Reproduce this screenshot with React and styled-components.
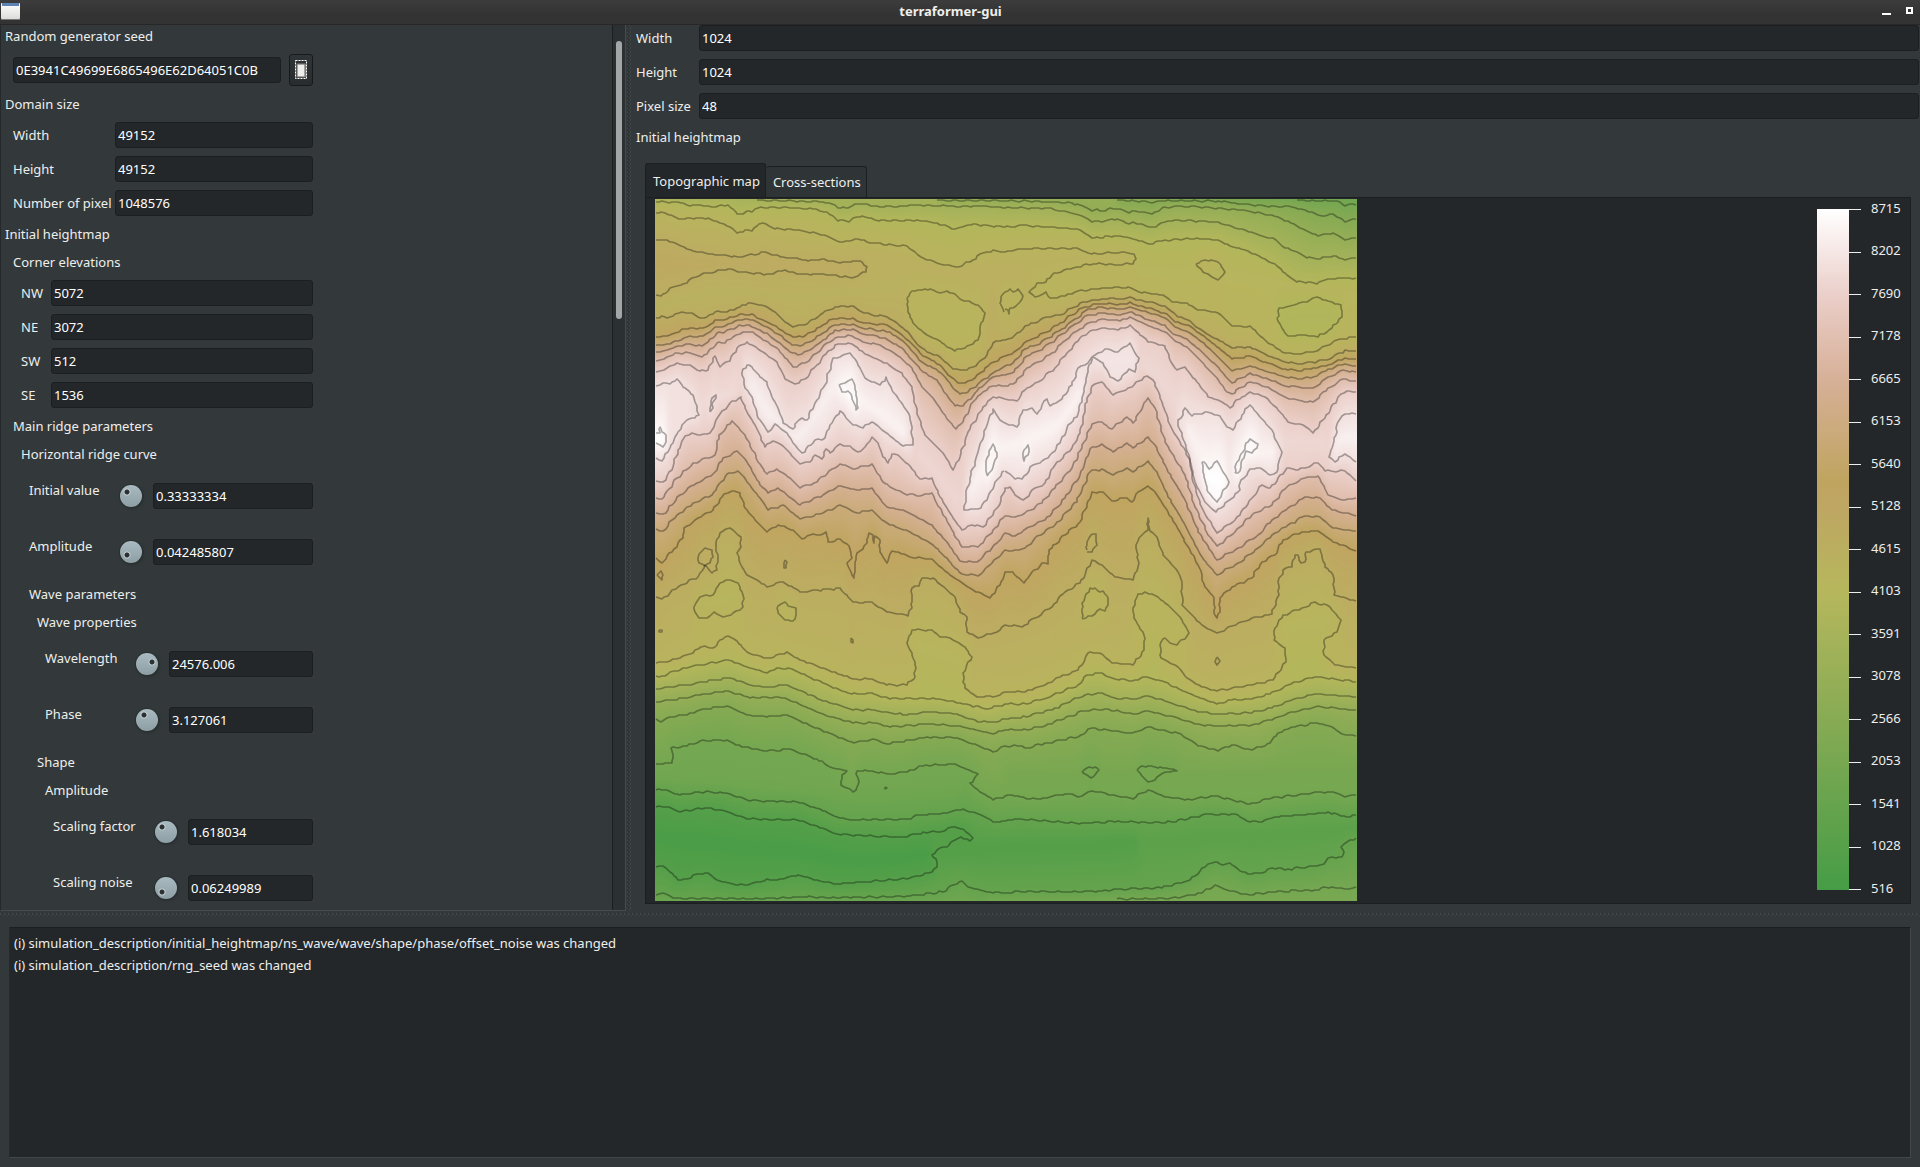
import React, { useId, useState } from "react";
import styled, { createGlobalStyle } from "styled-components";

const GlobalStyle = createGlobalStyle`
  * { box-sizing: border-box; }
  html, body { margin: 0; padding: 0; background: #33393b; }
  body, input, button {
    font-family: "Noto Sans", "Open Sans", sans-serif;
    font-size: 13px;
    line-height: 20px;
    color: #eeeeec;
  }
`;

const Shell = styled.div`
  display: flex;
  flex-direction: column;
  height: 100vh;
  overflow: hidden;
`;

/* ---------- title bar ---------- */

const TitleBar = styled.header`
  flex: none;
  display: flex;
  align-items: center;
  height: 25px;
  padding: 0 7px 2px 1px;
  background: linear-gradient(#3c3c3c, #333333 60%);
  border-bottom: 1px solid #272727;
`;

const AppIcon = styled.svg`
  width: 19px;
  height: 17px;
`;

const Title = styled.h1`
  flex: 1;
  margin: 0;
  font-size: 13px;
  line-height: 20px;
  font-weight: 700;
  text-align: center;
`;

const WindowButton = styled.button`
  display: flex;
  padding: 0;
  border: 0;
  background: none;
  & + & { margin-left: 14px; }
`;

/* ---------- panes ---------- */

const Workspace = styled.div`
  flex: 1;
  min-height: 0;
  display: flex;
`;

const Sidebar = styled.aside`
  flex: none;
  width: 33%;
  max-width: 626px;
  display: flex;
  border: 1px solid #454c4e;
  border-top: 0;
  border-left-color: #25292b;
`;

const ParameterList = styled.div`
  flex: 1;
  min-width: 0;
  padding: 1px 0 0 4px;
  overflow: hidden;
`;

const Scrollbar = styled.div`
  flex: none;
  width: 13px;
  padding: 16px 3px 0;
  border-left: 1px solid #1c1f20;
  background: #2b3032;
`;

const ScrollThumb = styled.div`
  width: 6px;
  height: 32%;
  border-radius: 3px;
  background: #a3a6a6;
`;

const Splitter = styled.div`
  flex: none;
  width: ${(p) => (p.$horizontal ? "auto" : "7px")};
  height: ${(p) => (p.$horizontal ? "7px" : "auto")};
  padding: ${(p) => (p.$horizontal ? "1px 0 2px" : "0 2px 0 1px")};
  background-color: #33393b;
  background-image:
    linear-gradient(45deg, #41484a 25%, transparent 25%, transparent 75%, #41484a 75%),
    linear-gradient(45deg, #2e3335 25%, transparent 25%, transparent 75%, #2e3335 75%);
  background-size: 4px 4px;
  background-position: 0 0, 2px 0;
  background-clip: content-box;
`;

const Preview = styled.main`
  flex: 1;
  min-width: 0;
  display: flex;
  flex-direction: column;
  padding: 0 1px 7px 3px;
`;

/* ---------- form parts ---------- */

const Group = styled.section`
  display: flex;
  flex-direction: column;
  gap: 8px;
  width: ${(p) => (p.$root ? "308px" : "auto")};
  padding-left: ${(p) => (p.$root ? "0" : "8px")};
`;

const Heading = styled.h2`
  margin: 0;
  font-size: 13px;
  line-height: 20px;
  font-weight: 400;
`;

const Row = styled.div`
  display: flex;
  align-items: center;
  min-height: ${(p) => (p.$tall ? "48px" : "26px")};
`;

const Label = styled.label`
  flex: none;
  width: ${(p) => p.$width}px;
  padding-bottom: ${(p) => (p.$raised ? "12px" : "0")};
  white-space: nowrap;
`;

const TextField = styled.input`
  flex: 1;
  min-width: 0;
  height: 26px;
  padding: 0 2px;
  border: 1px solid #1c1f20;
  border-radius: 3px;
  background: #232729;
  color: #ffffff;
  outline: none;
`;

const Knob = styled.input`
  flex: none;
  appearance: none;
  width: 22px;
  height: 22px;
  margin: 0 11px 0 0;
  border-radius: 50%;
  box-shadow: 0 0 0 1px #2b3032, 1px 1px 2px 1px #2b3032;
  background:
    radial-gradient(circle at ${(p) => p.$x}px ${(p) => p.$y}px, #2b3032 2px, #c4cfd2 3px, transparent 4px),
    linear-gradient(#a9bbc0, #8d9fa4);
  &::-webkit-slider-thumb { appearance: none; width: 1px; height: 1px; }
`;

const SeedRow = styled.div`
  display: flex;
  align-items: center;
  gap: 8px;
  height: 32px;
`;

const SeedButton = styled.button`
  flex: none;
  display: flex;
  align-items: center;
  justify-content: center;
  width: 24px;
  height: 32px;
  padding: 0;
  border: 1px solid #17191a;
  border-radius: 3px;
  background: linear-gradient(#2f3537, #272c2e);
`;

/* ---------- right pane ---------- */

const SizeForm = styled.form`
  display: flex;
  flex-direction: column;
  gap: 8px;
`;

const PreviewBody = styled.section`
  flex: 1;
  min-height: 0;
  display: flex;
  flex-direction: column;
  padding: 0 8px 0 9px;
`;

const PreviewHeading = styled(Heading)`
  padding: 8px 0 16px;
`;

const TabList = styled.div`
  display: flex;
  align-items: flex-end;
`;

const Tab = styled.button`
  height: ${(p) => (p.$active ? "34px" : "31px")};
  padding: 0 5px 0 7px;
  border: 1px solid #1c1f20;
  border-bottom: 0;
  border-left-width: ${(p) => (p.$active ? "1px" : "0")};
  border-radius: 3px 3px 0 0;
  background: ${(p) => (p.$active ? "#232729" : "#2f3537")};
`;

const TabPage = styled.div`
  flex: 1;
  min-height: 0;
  display: flex;
  justify-content: space-between;
  padding: 1px 9px 2px;
  border: 1px solid #1c1f20;
  background: #232729;
`;

const MapSvg = styled.svg`
  display: block;
  height: 100%;
  aspect-ratio: 1;
  overflow: hidden;
`;

const Legend = styled.div`
  display: flex;
  padding: 10px 0 11px;
`;

const LegendBar = styled.div`
  width: 32px;
  background: linear-gradient(#ffffff, #ebcfca 12.5%, #d7b098 25%, #bfa45f 40%, #bea663 43.75%, #b6b75c 56.25%, #77a751 81.25%, #469c46);
`;

const LegendScale = styled.ol`
  display: flex;
  flex-direction: column;
  justify-content: space-between;
  margin: 0;
  padding: 0;
  list-style: none;
`;

const LegendTick = styled.li`
  display: flex;
  align-items: center;
  gap: 10px;
  height: 1px;
  &::before {
    content: "";
    width: 12px;
    height: 1px;
    background: #eeeeec;
  }
`;

const TickLabel = styled.span`
  width: 30px;
  padding-bottom: 4px;
`;

/* ---------- log ---------- */

const LogPane = styled.footer`
  flex: none;
  display: flex;
  height: 249px;
  padding: 9px;
`;

const LogBox = styled.ul`
  flex: 1;
  margin: 0;
  padding: 4px;
  list-style: none;
  line-height: 22px;
  border: 1px solid #414849;
  border-top-color: #1c1f20;
  border-left-color: #25292b;
  background: #232729;
`;

/* ---------- topographic map ---------- */

// Map units: x 15..2121, y 12..2118. The second list of a line is shifted east.
const EAST = 1065;
const line = (level, west, east = []) => {
  const pairs = (a, dx) => {
    const out = [];
    for (let i = 0; i < a.length; i += 2) out.push([a[i] + dx, a[i + 1]]);
    return out;
  };
  return { level, pts: [...pairs(west, 0), ...pairs(east, EAST)] };
};

const contours = [
  line(2000, [], [875,16,980,18,1005,22,1020,34,1035,27,1053,29]),
  line(2500, [], [335,15,410,19,440,23,470,17,640,18,700,26,780,33,860,36,920,51,950,62,985,58,1020,80,1035,74,1053,72]),
  line(3000, [860,16,1060,18], [0,17,130,20,200,25,235,34,262,48,275,43,290,49,315,39,345,41,372,54,380,47,440,56,470,40,520,33,600,37,710,45,800,61,850,79,885,98,940,122,985,115,1020,134,1053,128]),
  line(3500, [320,16,520,20,555,30,565,38,580,36,595,39,615,26,650,28,680,34,750,33,800,30,900,34,1000,34,1060,38], [0,38,130,40,190,52,230,62,260,80,290,81,320,73,355,77,372,88,385,82,440,97,490,77,520,75,640,82,710,102,770,123,805,130,840,158,875,170,905,188,945,191,985,183,1020,194,1053,188]),
  line(4000, [18,20,85,22,110,30,150,31,185,35,235,31,250,42,262,56,280,56,290,48,305,50,325,38,400,37,490,41,530,51,550,64,565,79,580,76,597,80,620,66,645,66,675,75,750,78,800,76,860,85,885,90,905,101,925,98,945,93,970,87,1000,91,1060,96], [0,96,55,91,130,96,215,103,235,112,260,128,285,130,310,124,345,123,385,131,432,147,480,136,575,130,640,136,675,153,720,165,770,188,810,208,840,235,875,260,910,261,935,267,960,254,1000,250,1053,249]),
  line(4500, [18,53,45,53,75,66,95,72,120,69,175,70,210,83,240,95,262,115,285,104,305,108,320,93,340,85,375,101,440,104,530,122,570,142,600,139,625,132,660,143,770,154,820,190,870,207,925,216,960,200,1000,174,1030,165,1060,172], [0,171,50,162,130,160,215,160,260,177,350,172,388,178,393,192,385,206,340,209,265,206,205,218,140,240,122,260,95,265,72,290,90,305,122,292,135,310,180,302,220,288,290,280,370,276,410,293,475,300,500,320,545,325,580,345,640,353,680,393,735,394,780,435,830,470,875,478,925,470,1005,432,1053,426]),
  line(5000, [18,135,50,135,75,145,130,168,185,177,265,186,345,172,400,187,440,190,475,197,515,192,570,203,630,198,650,215,648,230,605,248,520,238,450,238,405,226,350,238,270,231,235,222,155,237,100,266,60,280,32,304,18,300]),
  line(5000, [18,370,35,363,50,368,95,352,125,355,150,369,170,367,195,350,230,350,270,335,295,324,345,333,375,352,405,382,430,395,470,386,510,360,555,336,610,332,630,348,665,360,710,365,740,385,775,412,800,446,830,470,870,485,910,523,950,526,985,505,1010,480,1028,443,1060,436], [0,435,20,430,45,411,60,392,90,384,125,366,165,360,200,340,235,322,290,311,345,312,375,306,400,316,440,321,480,334,520,365,550,374,580,400,620,425,645,437,680,458,735,456,790,482,840,500,880,507,920,502,965,495,1020,466,1053,467]),
  line(5500, [18,425,50,422,75,414,95,402,150,400,175,392,195,376,230,372,270,358,305,358,330,373,370,390,405,413,430,426,460,425,485,412,520,390,550,372,610,369,630,382,710,390,745,412,785,446,820,482,870,510,895,540,925,563,945,565,975,548,1015,512,1050,490], [0,483,20,478,45,460,65,438,90,430,125,410,165,385,200,360,240,335,285,326,345,328,375,322,400,332,450,345,485,357,510,380,550,390,590,420,635,455,680,492,735,484,790,505,840,522,880,528,925,520,970,510,1020,490,1053,493]),
  line(6000, [18,450,50,448,75,438,120,424,160,424,195,397,225,394,255,378,285,373,310,376,350,397,390,420,425,450,450,453,485,438,520,413,555,389,610,387,635,400,670,403,720,412,760,438,790,472,815,502,850,518,880,540,910,580,930,597,955,590,985,568,1020,540], [0,513,15,510,40,490,60,462,95,450,130,428,170,402,210,373,250,343,290,337,345,343,375,336,410,347,470,365,490,374,510,397,550,410,590,440,635,482,680,528,735,513,790,530,840,545,880,552,925,545,970,523,1020,507,1053,513]),
  line(6500, [18,470,50,465,75,455,120,447,155,453,175,440,200,414,225,410,260,395,290,390,315,400,350,415,390,445,420,472,445,480,480,465,520,435,555,406,610,402,640,418,670,420,715,435,755,458,785,495,820,530,860,555,890,600,915,634,940,632,975,595,1010,560,1040,543], [0,540,20,535,45,510,65,482,100,468,135,445,170,418,210,388,250,360,290,354,345,360,375,350,400,361,440,378,480,391,505,418,545,432,590,470,635,513,680,565,735,535,790,552,840,573,900,578,925,578,970,547,1015,526,1053,532]),
  line(7000, [18,497,50,487,75,474,120,473,155,486,175,470,200,445,225,443,250,425,280,412,310,412,340,435,380,458,410,493,430,517,465,503,500,475,530,445,565,425,605,422,640,440,690,450,750,485,785,520,815,575,850,610,880,655,917,703,940,680,970,620,1000,590,1030,572], [0,574,25,568,45,545,65,520,100,500,140,475,175,440,215,408,250,385,290,372,345,378,375,366,400,378,440,397,480,410,510,437,545,455,590,500,635,550,665,590,680,597,735,560,790,577,840,607,890,617,925,622,970,580,1015,552,1053,558]),
  line(7500, [18,530,50,518,80,505,120,510,150,528,175,525,195,482,210,515,240,497,260,460,290,441,325,462,380,500,405,552,435,568,465,552,500,510,535,468,565,446,605,446,645,477,710,505,755,535,785,575,800,650,825,720,850,745,880,775,910,825,930,785,955,710,1000,635,1030,605], [0,612,35,617,65,578,100,560,150,520,185,475,225,430,255,408,290,398,340,405,375,391,430,440,480,452,495,495,515,525,540,517,575,560,610,605,650,620,675,638,710,605,735,592,780,605,820,645,850,682,895,690,925,713,960,670,1000,605,1025,588,1053,592]),
  line(8000, [18,572,40,565,60,567,82,553,100,575,130,600,147,660,135,670,110,675,85,710,60,760,35,797,18,790]),
  line(8000, [181,652,183,630,187,610,197,600,197,608,190,620,188,640,181,652]),
  line(8000, [275,530,290,510,305,515,330,545,350,560,365,605,385,640,400,685,430,703,440,680,455,670,470,675,500,615,525,570,550,490,600,475,620,500,645,550,690,570,708,547,725,585,760,630,780,665,790,750,760,753,715,718,665,680,640,698,610,690,570,647,540,690,525,730,495,735,455,775,430,745,410,715,375,687,355,710,325,670,305,605,285,580,275,530]),
  line(8000, [1063,827,1040,855,1010,915,985,943,943,945,948,900,960,850,985,770,1010,690,1030,643,1050,675], [0,685,35,695,55,645,80,640,95,657,125,612,135,632,170,612,200,570,220,518,250,505,262,487,300,463,340,470,375,445,390,475,402,490,390,530,372,523,340,558,315,545,295,505,262,485,245,540,235,600,215,665,190,690,165,745,130,790,85,810,50,852,30,852,0,827]),
  line(8000, [], [518,685,540,640,560,663,600,652,645,662,665,695,685,705,710,660,735,630,770,672,800,705,830,770,815,830,795,840,765,818,735,822,705,865,700,890,670,918,632,950,600,920,570,860,552,780,518,685]),
  line(8000, [], [1053,657,1020,657,1000,680,985,750,972,785,990,800,1020,778,1053,800]),
  line(8500, [18,715,30,715,30,695,36,710,48,720,47,740,40,755,18,745]),
  line(8500, [567,570,585,565,605,552,613,565,618,600,625,640,618,645,605,605,595,588,575,590,567,570]),
  line(8500, [1010,840,1008,820,1012,790,1028,748,1042,775,1030,815,1012,843]),
  line(8500, [], [55,785,56,765,70,750,72,770,58,797,55,785]),
  line(8500, [], [590,800,597,800,612,822,637,798,655,830,672,860,635,922,605,885,595,830,590,800]),
  line(8500, [], [690,835,695,800,715,770,722,745,735,732,760,748,740,773,722,768,700,835,690,835]),
  line(7500, [18,858,40,862,65,825,85,765,105,722,125,715,150,720,180,713,210,658,240,625,272,605,290,650,315,690,345,755,370,738,400,752,450,808,480,800,495,780,515,792,528,762,540,773,570,748,600,753,625,772,645,755,665,727,685,745,700,785,715,805,725,778,745,780,775,808,810,853,845,850,870,905,900,955,935,1005,965,990,1000,995,1045,935], [0,878,15,877,30,900,55,915,90,880,120,865,150,810,200,760,225,715,245,620,262,572,290,562,325,600,380,575,425,542,445,555,470,620,495,690,550,785,565,860,590,940,635,1013,690,975,740,910,770,870,795,880,845,820,880,825,940,803,960,828,1020,828,1053,858]),
  line(7000, [18,908,35,912,80,850,130,805,195,780,208,720,247,678,285,720,325,800,350,838,380,823,415,845,450,880,500,860,570,807,615,822,665,807,700,860,720,875,760,895,800,902,845,895,880,960,935,1055,985,1055,1030,1005], [0,962,30,967,60,955,110,925,150,880,200,820,230,760,260,688,290,682,320,703,365,665,385,683,405,650,428,608,450,640,480,740,540,840,570,935,610,1020,637,1053,690,1010,740,960,800,930,845,875,900,850,940,843,970,900,1010,915,1053,910]),
  line(6500, [18,955,40,958,90,900,140,863,190,838,220,790,262,768,290,800,330,870,355,893,385,880,450,930,520,900,565,872,620,885,665,880,710,937,760,945,845,990,890,1040,930,1098,980,1102,1040,1045], [0,1015,30,1022,65,1000,120,975,180,910,225,840,255,762,290,748,325,770,365,745,385,760,428,725,450,750,490,830,540,915,580,1010,635,1095,700,1060,760,1020,800,975,850,940,900,905,945,910,980,945,1053,962]),
  line(6000, [18,1003,38,1007,80,960,130,925,185,900,230,838,265,828,300,870,355,945,400,930,450,973,520,955,570,930,620,955,665,945,710,985,780,1010,850,1050,890,1090,935,1138,985,1142,1040,1090], [0,1065,20,1068,60,1060,90,1030,150,990,215,920,255,830,290,823,325,840,365,818,385,832,428,798,455,830,490,905,540,990,590,1085,635,1140,700,1105,760,1060,800,1020,850,990,900,962,945,965,985,1000,1053,1008]),
  line(5500, [18,1090,35,1105,65,1070,98,1030,103,998,160,960,190,945,215,905,245,887,270,895,285,940,330,990,350,1010,385,990,430,1005,455,1032,490,1018,510,1020,527,1010,535,1040,570,1032,598,1052,605,1090,592,1105,603,1130,612,1150,618,1085,650,1045,658,1015,668,1020,672,1045,676,1022,690,1035,690,1070,710,1105,725,1068,745,1070,780,1085,845,1093,900,1140,960,1180,1020,1208,1050,1170], [0,1132,25,1130,35,1145,58,1165,75,1140,110,1105,130,1107,133,1065,180,1020,225,980,262,892,295,892,320,918,365,908,380,922,400,890,428,872,450,890,500,970,555,1065,580,1110,600,1175,628,1210,628,1255,637,1268,645,1250,645,1210,680,1175,740,1150,770,1100,810,1080,835,1035,890,1010,940,1008,985,1040,1053,1068]),
  line(5500, [20,1140,32,1128,40,1140,35,1155,20,1140]),
  line(5000, [18,1205,35,1213,85,1175,145,1145,165,1110,185,1135,200,1125,203,1080,197,1050,210,1015,240,998,272,1025,272,1055,262,1075,275,1115,290,1140,320,1155,350,1175,400,1160,450,1190,570,1180,610,1222,665,1222,710,1250,775,1262,785,1240,785,1180,808,1172,815,1150,850,1150,915,1205,930,1250,950,1265,950,1310,985,1328,1040,1310], [0,1290,50,1295,90,1270,140,1235,180,1190,225,1165,262,1095,290,1110,330,1145,385,1155,402,1105,393,1050,410,1020,428,1005,430,970,434,1008,455,1025,475,1080,520,1130,530,1160,532,1230,590,1290,635,1315,700,1285,740,1270,800,1258,822,1200,820,1160,835,1125,860,1115,870,1080,880,1080,888,1105,900,1100,903,1070,945,1062,960,1115,985,1140,988,1200,1053,1217]),
  line(5000, [148,1078,165,1060,185,1065,188,1085,180,1105,165,1112,148,1105,145,1090,148,1078]),
  line(5000, [404,1095,410,1100,408,1120,401,1118,404,1095]),
  line(5000, [28,1305,36,1305,36,1312,28,1310,28,1305]),
  line(5000, [604,1330,610,1335,608,1345,604,1340,604,1330]),
  line(5000, [], [245,1065,247,1040,258,1020,273,1018,277,1050,262,1072,245,1070]),
  line(5000, [], [637,1387,645,1398,637,1410,629,1400,637,1387]),
  line(4500, [18,1405,90,1390,145,1362,165,1352,180,1360,195,1355,210,1335,235,1322,260,1337,290,1372,350,1390,410,1372,450,1395,520,1420,610,1452,665,1452,710,1470,770,1470,795,1445,795,1400,772,1345,785,1305,845,1305,870,1325,900,1330,945,1355,965,1385,938,1435,945,1480,980,1505,1030,1505], [0,1490,60,1490,120,1470,165,1445,220,1425,250,1375,275,1373,290,1378,320,1403,385,1410,418,1365,418,1320,388,1270,385,1240,400,1198,420,1190,460,1205,525,1265,552,1315,515,1350,495,1345,480,1328,467,1340,468,1390,520,1415,545,1450,590,1475,635,1487,740,1470,805,1455,842,1400,840,1360,808,1335,810,1300,835,1260,890,1240,930,1222,975,1235,1007,1275,995,1310,957,1335,957,1380,990,1410,1053,1420]),
  line(4500, [133,1235,150,1205,190,1200,210,1165,240,1155,265,1165,280,1200,278,1235,250,1255,220,1265,192,1250,170,1268,148,1268,135,1250,133,1235]),
  line(4500, [380,1240,392,1228,405,1220,415,1232,437,1240,437,1260,430,1278,405,1275,385,1255,380,1240]),
  line(4500, [772,310,785,288,825,283,850,286,870,293,890,288,915,298,930,312,985,330,1005,355,990,395,985,435,960,450,915,468,890,455,870,437,830,420,790,385,775,350,772,310]),
  line(4500, [1063,350,1050,325,1055,300,1065,290], [15,283,25,290,40,283,53,303,40,328,15,340,12,357,8,345,0,343]),
  line(4500, [], [572,208,600,195,640,200,660,230,640,255,600,235,572,208]),
  line(4500, [], [232,1270,232,1225,255,1180,270,1180,285,1190,293,1187,308,1210,308,1230,300,1247,285,1243,262,1262,232,1272]),
  line(4000, [], [817,370,822,340,855,332,895,322,935,306,970,318,1008,330,1010,365,980,400,940,425,890,421,850,423,830,400,817,370]),
  line(4000, [18,1443,35,1443,100,1420,150,1410,235,1395,290,1415,350,1433,380,1420,425,1422,520,1465,605,1497,665,1495,720,1512,850,1510,930,1525,1015,1542], [0,1527,65,1527,125,1508,220,1470,245,1440,292,1435,320,1450,380,1457,425,1445,480,1462,550,1495,635,1527,680,1515,740,1512,795,1497,850,1470,930,1445,1053,1460]),
  line(3500, [18,1482,110,1470,190,1455,240,1448,290,1467,350,1477,410,1470,520,1517,610,1545,665,1545,770,1560,840,1550,920,1557,985,1580,1040,1580], [0,1572,65,1565,150,1540,220,1508,250,1498,290,1495,330,1510,385,1512,430,1503,490,1520,560,1545,635,1558,740,1553,800,1540,860,1515,930,1497,1053,1505]),
  line(3000, [18,1520,100,1510,160,1497,235,1488,300,1508,405,1508,510,1555,610,1584,670,1584,720,1595,830,1587,920,1592,1030,1617], [0,1605,70,1604,130,1588,240,1547,310,1543,385,1557,430,1548,520,1570,580,1588,635,1593,740,1590,810,1570,850,1555,930,1535,1053,1545]),
  line(2500, [18,1573,32,1580,50,1568,110,1560,150,1545,232,1532,290,1560,350,1565,410,1560,460,1583,530,1612,612,1643,670,1632,710,1647,830,1627,920,1628,1030,1670], [0,1653,50,1653,65,1660,120,1645,220,1625,260,1600,380,1615,430,1597,520,1615,580,1652,640,1667,680,1650,740,1665,795,1643,820,1615,860,1597,935,1583,980,1595,1010,1617,1053,1622]),
  line(2000, [18,1707,65,1705,70,1680,62,1660,110,1653,150,1638,230,1635,275,1655,350,1668,420,1663,500,1692,550,1720,590,1727,575,1740,572,1770,610,1790,625,1770,620,1727,665,1728,715,1737,770,1730,820,1712,915,1707,985,1738,960,1765,975,1780,1030,1815], [0,1803,40,1802,65,1813,125,1808,165,1800,200,1798,220,1807,260,1788,300,1795,385,1812,400,1797,430,1785,480,1805,540,1815,630,1803,735,1827,800,1810,930,1792,985,1792,1020,1806,1053,1800]),
  line(2000, [], [232,1730,245,1718,270,1715,283,1725,257,1750,232,1730]),
  line(2000, [], [397,1725,405,1715,430,1712,475,1720,495,1722,515,1727,495,1730,475,1735,450,1755,430,1760,410,1743,397,1725]),
  line(2000, [705,1777,711,1780,706,1783,705,1777]),
  line(1500, [18,1785,45,1785,90,1800,165,1790,220,1793,300,1817,440,1820,510,1843,560,1867,610,1875,770,1873,810,1860,880,1855,940,1842,1000,1862,1030,1880], [0,1877,40,1872,230,1885,330,1880,480,1883,550,1872,600,1858,690,1857,735,1880,770,1880,810,1865,920,1857,970,1852,1025,1865,1053,1860]),
  line(1000, [18,1835,50,1835,90,1850,165,1838,225,1848,290,1872,440,1875,500,1893,560,1918,760,1927,820,1912,870,1910,915,1895,940,1902,970,1928,960,1937,932,1927,910,1938,890,1955,870,1960,847,1980,862,2000,862,2015,845,2032,780,2050,650,2060,560,2067,500,2055,445,2040,380,2055,350,2053,300,2068,265,2070,200,2055,175,2035,140,2037,110,2053,85,2055,60,2030,40,2013,18,2015]),
  line(1500, [18,2100,40,2095,70,2110,300,2112,460,2106,560,2108,770,2104,880,2090,910,2070,935,2058,955,2075,1010,2090], [0,2094,40,2089,170,2091,290,2088,340,2083,470,2078,555,2055,600,2015,630,2000,655,2010,675,2005,705,2027,730,2037,770,2035,800,2020,850,2023,945,2010,980,1985,1010,1987,1018,1972,1008,1955,1025,1940,1053,1928]),
  line(2000, [], [335,2112,490,2111,590,2095,630,2070,665,2085,735,2100,800,2090,930,2085,980,2075,1020,2083,1053,2075]),
];

// Undrawn crest and valley lines, so that the shading does not go flat between equal contours.
const shading = [
  line(3500, [0,2,900,2], []), line(3050, [901,2], [0,2,500,2]), line(1850, [], [501,2,1060,2]),
  line(5250, [0,215,200,205]), line(5100, [201,205,600,218]),
  line(4600, [0,335,200,290,440,310,700,280,770,260]),
  line(4800, [640,180,760,200,1000,230], [0,235,60,215]), line(4650, [], [61,215,200,190,380,190]),
  line(4400, [800,350,900,380,990,370]), line(4250, [], [400,230,700,240,820,260,1053,300]),
  line(3900, [], [830,365,990,365]),
  line(8650, [0,728,44,725]), line(7850, [120,640,270,590]), line(8350, [290,560,350,650,440,735,540,580,600,560]),
  line(8620, [575,575,618,620]), line(8400, [625,610,770,720]), line(7700, [800,770,935,930]),
  line(8400, [955,890,1040,760], [0,760,150,700,240,590]), line(8150, [], [270,500,390,490]), line(7750, [], [410,500,515,620]),
  line(8400, [], [540,690,600,790]), line(8710, [], [600,840,660,860]), line(8400, [], [680,800,810,770]), line(7750, [], [830,740,970,740]),
  line(8350, [], [985,735,1060,725]),
  line(4250, [150,1235,270,1200]), line(4700, [290,1260,600,1330,780,1360]), line(4300, [800,1345,940,1400]), line(4750, [960,1400], [0,1400,230,1330,380,1300]),
  line(4350, [], [400,1240,530,1300]), line(4850, [], [545,1380,640,1398,800,1370]), line(4250, [], [830,1290,990,1270]),
  line(650, [0,1925,400,1965,640,2000,840,1975]), line(950, [870,1975], [0,1955,400,1940]), line(1200, [], [400,1940,1060,1900]),
  line(1850, [0,1745,560,1790,930,1780]), line(2080, [], [0,1740,230,1740,1053,1730]),
  line(1850, [0,2128,1000,2128]), line(2150, [1001,2128], [0,2128,1060,2128]),
];

const ramp = [
  [516, 70, 156, 70], [2053, 119, 167, 81], [4103, 182, 183, 92], [5000, 188, 173, 97],
  [5500, 192, 165, 97], [6665, 216, 178, 154], [7500, 235, 207, 201], [8100, 243, 228, 227], [8650, 255, 255, 255],
];

const colourOf = (h) => {
  let i = 1;
  while (i < ramp.length - 1 && h > ramp[i][0]) i += 1;
  const [a, b] = [ramp[i - 1], ramp[i]];
  const t = Math.max(0, Math.min(1, (h - a[0]) / (b[0] - a[0])));
  return `rgb(${[1, 2, 3].map((k) => Math.round(a[k] + (b[k] - a[k]) * t)).join(",")})`;
};

const profileAt = (x) => {
  const cuts = [];
  [...contours, ...shading].forEach(({ level, pts }) => {
    for (let i = 1; i < pts.length; i += 1) {
      const [x0, y0] = pts[i - 1];
      const [x1, y1] = pts[i];
      if ((x0 <= x && x < x1) || (x1 <= x && x < x0)) {
        cuts.push([y0 + ((y1 - y0) * (x - x0)) / (x1 - x0), level]);
      }
    }
  });
  return cuts.sort((a, b) => a[0] - b[0]);
};

const TOP = -40;
const TALL = 2210;
const STEP = 9;
const columns = Array.from({ length: 242 }, (_, i) => {
  const x = -30 + i * STEP;
  return { x, cuts: profileAt(Math.max(19.5, Math.min(2117.5, x + 4.5))) };
});

const tracePath = (pts, seed) => {
  const snap = (v) => Math.round(v / 3) * 3;
  const out = [];
  for (let i = 1; i < pts.length; i += 1) {
    const [x0, y0] = pts[i - 1];
    const [x1, y1] = pts[i];
    const n = Math.max(1, Math.round(Math.hypot(x1 - x0, y1 - y0) / 10));
    for (let k = 0; k < n; k += 1) {
      const wobble = k ? Math.sin((seed + i) * 12.9 + k * 4.7) * 2 : 0;
      out.push(`${snap(x0 + ((x1 - x0) * k) / n + wobble)} ${snap(y0 + ((y1 - y0) * k) / n + wobble)}`);
    }
  }
  const last = pts[pts.length - 1];
  out.push(`${snap(last[0])} ${snap(last[1])}`);
  return `M${out.join("L")}`;
};

function TopographicMap() {
  return (
    <MapSvg viewBox="15 12 2106 2106" role="img" aria-label="Topographic map">
      <defs>
        <filter id="smooth" x="-60" y="-60" width="2260" height="2260" filterUnits="userSpaceOnUse" colorInterpolationFilters="sRGB">
          <feGaussianBlur stdDeviation="8 6" />
        </filter>
        {columns.map(({ x, cuts }, i) => (
          <linearGradient key={x} id={`col${i}`} gradientUnits="userSpaceOnUse" x1="0" x2="0" y1={TOP} y2={TOP + TALL}>
            {cuts.map(([y, h], k) => (
              <stop key={k} offset={(y - TOP) / TALL} stopColor={colourOf(h)} />
            ))}
          </linearGradient>
        ))}
      </defs>
      <g filter="url(#smooth)">
        {columns.map(({ x }, i) => (
          <rect key={x} x={x} y={TOP} width={STEP + 1} height={TALL} fill={`url(#col${i})`} />
        ))}
      </g>
      <g fill="none" stroke="#000000" strokeOpacity="0.33" strokeWidth="5" strokeLinejoin="round">
        {contours.map((c, i) => (
          <path key={i} d={tracePath(c.pts, i)} />
        ))}
      </g>
    </MapSvg>
  );
}

/* ---------- composed fields ---------- */

function Field({ label, value, width }) {
  const id = useId();
  return (
    <Row>
      <Label htmlFor={id} $width={width}>{label}</Label>
      <TextField id={id} type="text" defaultValue={value} />
    </Row>
  );
}

function KnobField({ label, value, width, dot }) {
  const id = useId();
  return (
    <Row $tall>
      <Label htmlFor={id} $width={width} $raised>{label}</Label>
      <Knob type="range" aria-label={`${label} knob`} $x={dot[0]} $y={dot[1]} />
      <TextField id={id} type="text" defaultValue={value} />
    </Row>
  );
}

const elevations = [8715, 8202, 7690, 7178, 6665, 6153, 5640, 5128, 4615, 4103, 3591, 3078, 2566, 2053, 1541, 1028, 516];
const messages = [
  "(i) simulation_description/initial_heightmap/ns_wave/wave/shape/phase/offset_noise was changed",
  "(i) simulation_description/rng_seed was changed",
];
const tabs = ["Topographic map", "Cross-sections"];

export default function App() {
  const [tab, setTab] = useState(tabs[0]);
  return (
    <Shell>
      <GlobalStyle />
      <TitleBar>
        <AppIcon viewBox="0 0 19 17" aria-hidden="true">
          <defs>
            <linearGradient id="sheet" x1="0" x2="0" y1="0" y2="1">
              <stop offset="0" stopColor="#ffffff" />
              <stop offset="1" stopColor="#dcddd8" />
            </linearGradient>
          </defs>
          <rect x="0" y="0" width="19" height="16" rx="1" fill="url(#sheet)" />
          <rect x="1" y="0" width="17" height="3" fill="#5f82b5" />
          <rect x="0" y="16" width="19" height="1" fill="#777777" />
        </AppIcon>
        <Title>terraformer-gui</Title>
        <WindowButton aria-label="Minimize">
          <svg width="10" height="10"><path d="M1 7h9v2h-9z" fill="#fff" /></svg>
        </WindowButton>
        <WindowButton aria-label="Maximize">
          <svg width="8" height="10"><path d="M2 2h5v5h-5z" fill="none" stroke="#fff" strokeWidth="2" /></svg>
        </WindowButton>
      </TitleBar>

      <Workspace>
        <Sidebar>
          <ParameterList>
            <Group $root>
              <Heading>Random generator seed</Heading>
              <Group>
                <SeedRow>
                  <TextField type="text" aria-label="Random generator seed" defaultValue="0E3941C49699E6865496E62D64051C0B" />
                  <SeedButton aria-label="Generate seed">
                    <svg width="12" height="20" viewBox="0 0 12 20">
                      <rect x="0.5" y="0.5" width="11" height="18" fill="none" stroke="#ffffff" strokeDasharray="2 1" />
                      <rect x="2" y="4" width="8" height="13" fill="none" stroke="#8a7f78" strokeWidth="1" />
                      <rect x="2.5" y="4.5" width="7" height="12" fill="#eeeeec" />
                      <path d="M10.5 4v13" stroke="#b5703a" />
                    </svg>
                  </SeedButton>
                </SeedRow>
              </Group>
              <Heading>Domain size</Heading>
              <Group>
                <Field label="Width" value="49152" width={102} />
                <Field label="Height" value="49152" width={102} />
                <Field label="Number of pixel" value="1048576" width={102} />
              </Group>
              <Heading>Initial heightmap</Heading>
              <Group>
                <Heading>Corner elevations</Heading>
                <Group>
                  <Field label="NW" value="5072" width={30} />
                  <Field label="NE" value="3072" width={30} />
                  <Field label="SW" value="512" width={30} />
                  <Field label="SE" value="1536" width={30} />
                </Group>
                <Heading>Main ridge parameters</Heading>
                <Group>
                  <Heading>Horizontal ridge curve</Heading>
                  <Group>
                    <KnobField label="Initial value" value="0.33333334" width={91} dot={[7, 7]} />
                    <KnobField label="Amplitude" value="0.042485807" width={91} dot={[7, 14]} />
                    <Heading>Wave parameters</Heading>
                    <Group>
                      <Heading>Wave properties</Heading>
                      <Group>
                        <KnobField label="Wavelength" value="24576.006" width={91} dot={[16, 9]} />
                        <KnobField label="Phase" value="3.127061" width={91} dot={[8, 6]} />
                      </Group>
                      <Heading>Shape</Heading>
                      <Group>
                        <Heading>Amplitude</Heading>
                        <Group>
                          <KnobField label="Scaling factor" value="1.618034" width={102} dot={[7, 6]} />
                          <KnobField label="Scaling noise" value="0.06249989" width={102} dot={[7, 15]} />
                        </Group>
                      </Group>
                    </Group>
                  </Group>
                </Group>
              </Group>
            </Group>
          </ParameterList>
          <Scrollbar><ScrollThumb /></Scrollbar>
        </Sidebar>

        <Splitter />

        <Preview>
          <SizeForm>
            <Field label="Width" value="1024" width={63} />
            <Field label="Height" value="1024" width={63} />
            <Field label="Pixel size" value="48" width={63} />
          </SizeForm>
          <PreviewHeading>Initial heightmap</PreviewHeading>
          <PreviewBody>
            <TabList role="tablist">
              {tabs.map((name) => (
                <Tab key={name} type="button" role="tab" aria-selected={tab === name} $active={tab === name} onClick={() => setTab(name)}>
                  {name}
                </Tab>
              ))}
            </TabList>
            <TabPage role="tabpanel">
              <TopographicMap />
              <Legend>
                <LegendBar />
                <LegendScale>
                  {elevations.map((e) => (
                    <LegendTick key={e}><TickLabel>{e}</TickLabel></LegendTick>
                  ))}
                </LegendScale>
              </Legend>
            </TabPage>
          </PreviewBody>
        </Preview>
      </Workspace>

      <Splitter $horizontal />

      <LogPane>
        <LogBox aria-label="Log">
          {messages.map((m) => (
            <li key={m}>{m}</li>
          ))}
        </LogBox>
      </LogPane>
    </Shell>
  );
}
